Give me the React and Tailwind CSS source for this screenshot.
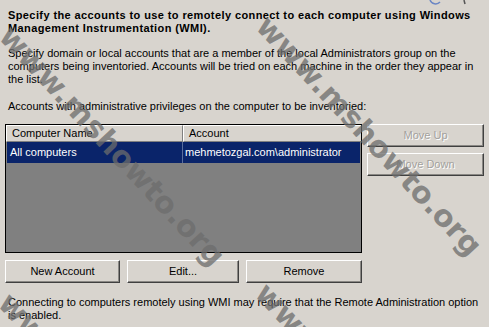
import React from "react";

function Btn({ children, className = "", disabled = false }) {
  return (
    <div
      className={
        "h-[23px] flex items-center justify-center bg-[#d8d4ce] border border-t-white border-l-white border-r-[#404040] border-b-[#404040] shadow-[inset_-1px_-1px_0_#8a8884] " +
        (disabled ? "text-[#a3a19d] [text-shadow:1px_1px_0_#ffffff] " : "text-black ") +
        className
      }
    >
      {children}
    </div>
  );
}

function Watermark({ className }) {
  return (
    <div
      className={
        "absolute -translate-x-1/2 -translate-y-1/2 rotate-[47deg] whitespace-nowrap font-bold text-[30px] leading-none text-[#6c6c6c]/75 pointer-events-none select-none font-['DejaVu_Sans',Verdana,sans-serif] " +
        className
      }
    >
      www.mshowto.org
    </div>
  );
}

export default function App() {
  return (
    <div className="relative w-[489px] h-[327px] overflow-hidden bg-[#d8d4ce] text-black text-[11px] leading-[13px] font-['Liberation_Sans',Arial,sans-serif]">
      <div className="pl-2 pr-[14px] pt-[9px]">
        <h1 className="font-bold tracking-[0.4px] -mr-[10px]">
          Specify the accounts to use to remotely connect to each computer using Windows Management Instrumentation (WMI).
        </h1>
        <p className="mt-[12px]">
          Specify domain or local accounts that are a member of the local Administrators group on the computers being inventoried. Accounts will be tried on each machine in the order they appear in the list.
        </p>
        <p className="mt-[14px]">Accounts with administrative privileges on the computer to be inventoried:</p>
      </div>

      <div className="flex mt-[11px] pl-[5px]">
        <div className="w-[357px] h-[129px] border border-black bg-[#808080] flex flex-col">
          <div className="flex h-[17px]">
            <div className="w-[177px] bg-[#d8d4ce] border-t border-l border-white border-r border-b border-r-[#808080] border-b-[#808080] pl-[5px] flex items-center">
              Computer Name
            </div>
            <div className="flex-1 bg-[#d8d4ce] border-t border-l border-white border-b border-b-[#808080] pl-[5px] flex items-center">
              Account
            </div>
          </div>
          <div className="flex h-[21px] mx-px bg-[#0a246a] text-white">
            <div className="w-[176px] pl-[3px] flex items-center border-r border-r-[#5a6e9e]">All computers</div>
            <div className="flex-1 pl-[2px] flex items-center">mehmetozgal.com\administrator</div>
          </div>
        </div>
        <div className="ml-[5px] flex flex-col gap-[6px] w-[117px]">
          <Btn disabled>Move Up</Btn>
          <Btn disabled>Move Down</Btn>
        </div>
      </div>

      <div className="flex gap-[7px] pl-[5px] mt-[7px]">
        <Btn className="w-[115px]">New Account</Btn>
        <Btn className="w-[112px]">Edit...</Btn>
        <Btn className="w-[116px]">Remove</Btn>
      </div>

      <p className="pl-2 pr-[8px] mt-[13px]">
        Connecting to computers remotely using WMI may require that the Remote Administration option is enabled.
      </p>

      <svg className="absolute left-[428px] top-0" width="42" height="7" viewBox="0 0 42 7">
        <path d="M2 0 A6 6 0 0 0 12 2" fill="none" stroke="#6b86c4" strokeWidth="1.5" />
        <path d="M36 0 L37 4" fill="none" stroke="#555" strokeWidth="1.5" />
      </svg>

      <Watermark className="left-[369px] top-[136px]" />
      <Watermark className="left-[112px] top-[146px]" />
      <Watermark className="left-[368px] top-[403px]" />
      <Watermark className="left-[111px] top-[413px]" />
    </div>
  );
}
